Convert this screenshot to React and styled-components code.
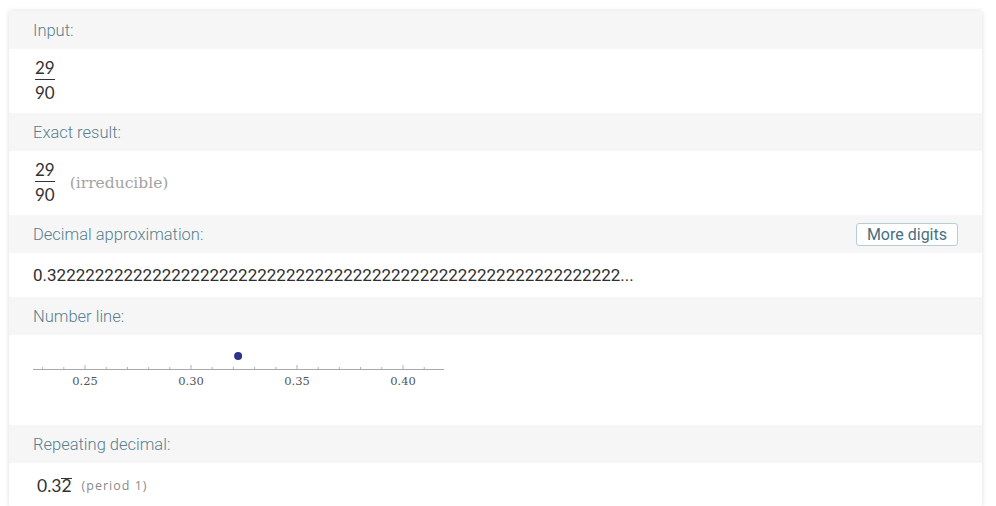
import React from 'react';
import styled, { createGlobalStyle } from 'styled-components';

const Global = createGlobalStyle`
  *, *::before, *::after { box-sizing: border-box; }
  html, body { margin: 0; padding: 0; background: #fff; }
  body { font-family: Roboto, "Liberation Sans", sans-serif; }
`;

const Page = styled.div`
  padding: 11px 14px 0 9px;
`;

const Card = styled.div`
  width: 973px;
  background: #fff;
  border-radius: 3px;
  box-shadow: 0 0 5px rgba(0, 0, 0, 0.14);
  overflow: hidden;
`;

const Header = styled.div`
  height: 38px;
  background: #f6f6f6;
  display: flex;
  align-items: center;
  justify-content: space-between;
  padding: 0 24px;
  font-size: 16.5px;
  font-weight: 300;
  color: #56808f;
`;

const Body = styled.div`
  height: ${(p) => p.$h}px;
  display: flex;
  align-items: ${(p) => (p.$top ? 'flex-start' : 'center')};
  padding: ${(p) => (p.$top ? `${p.$top}px` : '0')} 24px 0 ${(p) => p.$left || 24}px;
  gap: ${(p) => p.$gap || 0}px;
`;

const MoreButton = styled.button`
  height: 23px;
  padding: 0 10px;
  border: 1px solid #b7ccd3;
  border-radius: 3px;
  background: #fff;
  color: #466f80;
  font-family: Roboto, "Liberation Sans", sans-serif;
  font-size: 16px;
  line-height: 21px;
  cursor: pointer;
`;

const Frac = styled.span`
  display: inline-flex;
  flex-direction: column;
  align-items: center;
  margin-left: 2px;
  margin-top: -2px;
  font-family: Lato, "Open Sans", sans-serif;
  font-size: 17px;
  color: #333;
  line-height: 19px;
`;

const FracBar = styled.span`
  align-self: stretch;
  height: 1px;
  background: #333;
  margin: 2px 0 3px;
`;

const Note = styled.span`
  font-family: "DejaVu Serif", serif;
  font-size: 15.5px;
  color: #a3a3a3;
`;

const Decimal = styled.span`
  font-family: Roboto, "Liberation Sans", sans-serif;
  font-size: 17px;
  color: #2e2e2e;
  white-space: nowrap;
`;

const Repeat = styled.span`
  font-family: Lato, "Open Sans", sans-serif;
  font-size: 17.5px;
  color: #333;
  margin-left: 4px;
`;

const Overlined = styled.span`
  display: inline-block;
  border-top: 1px solid #333;
  line-height: 13px;
`;

const Period = styled.span`
  font-family: "Open Sans", sans-serif;
  font-size: 12.5px;
  letter-spacing: 1px;
  color: #8a8a8a;
  margin-left: 10px;
`;

function NumberLine() {
  const xOf = (v) => 52 + (v - 0.25) * 2120;
  const ticks = [];
  for (let i = 23; i <= 41; i++) {
    const v = i / 100;
    const major = i % 5 === 0;
    ticks.push(
      <line key={i} x1={xOf(v)} x2={xOf(v)} y1={major ? 17 : 19} y2={21} stroke="#b0b0b0" strokeWidth="1" />
    );
  }
  const labels = [0.25, 0.3, 0.35, 0.4];
  return (
    <svg width="412" height="44" viewBox="0 0 412 44">
      <line x1="0" x2="411" y1="21.5" y2="21.5" stroke="#a8a8a8" strokeWidth="1" />
      {ticks}
      {labels.map((v) => (
        <text
          key={v}
          x={xOf(v)}
          y="37"
          textAnchor="middle"
          fontFamily="'DejaVu Serif', serif"
          fontSize="11.5"
          fill="#555"
        >
          {v.toFixed(2)}
        </text>
      ))}
      <circle cx={xOf(0.322222)} cy="8" r="4" fill="#2c3388" />
    </svg>
  );
}

function Fraction({ n, d }) {
  return (
    <Frac>
      <span>{n}</span>
      <FracBar />
      <span>{d}</span>
    </Frac>
  );
}

export default function App() {
  const digits = '0.3' + '2'.repeat(59) + '...';
  return (
    <>
      <Global />
      <Page>
        <Card>
          <Header>Input:</Header>
          <Body $h={64}>
            <Fraction n="29" d="90" />
          </Body>

          <Header>Exact result:</Header>
          <Body $h={64} $gap={15}>
            <Fraction n="29" d="90" />
            <Note>(irreducible)</Note>
          </Body>

          <Header>
            <span>Decimal approximation:</span>
            <MoreButton>More digits</MoreButton>
          </Header>
          <Body $h={44}>
            <Decimal>{digits}</Decimal>
          </Body>

          <Header>Number line:</Header>
          <Body $h={90} $top={13}>
            <NumberLine />
          </Body>

          <Header>Repeating decimal:</Header>
          <Body $h={44}>
            <Repeat>
              0.3<Overlined>2</Overlined>
            </Repeat>
            <Period>(period 1)</Period>
          </Body>
        </Card>
      </Page>
    </>
  );
}
